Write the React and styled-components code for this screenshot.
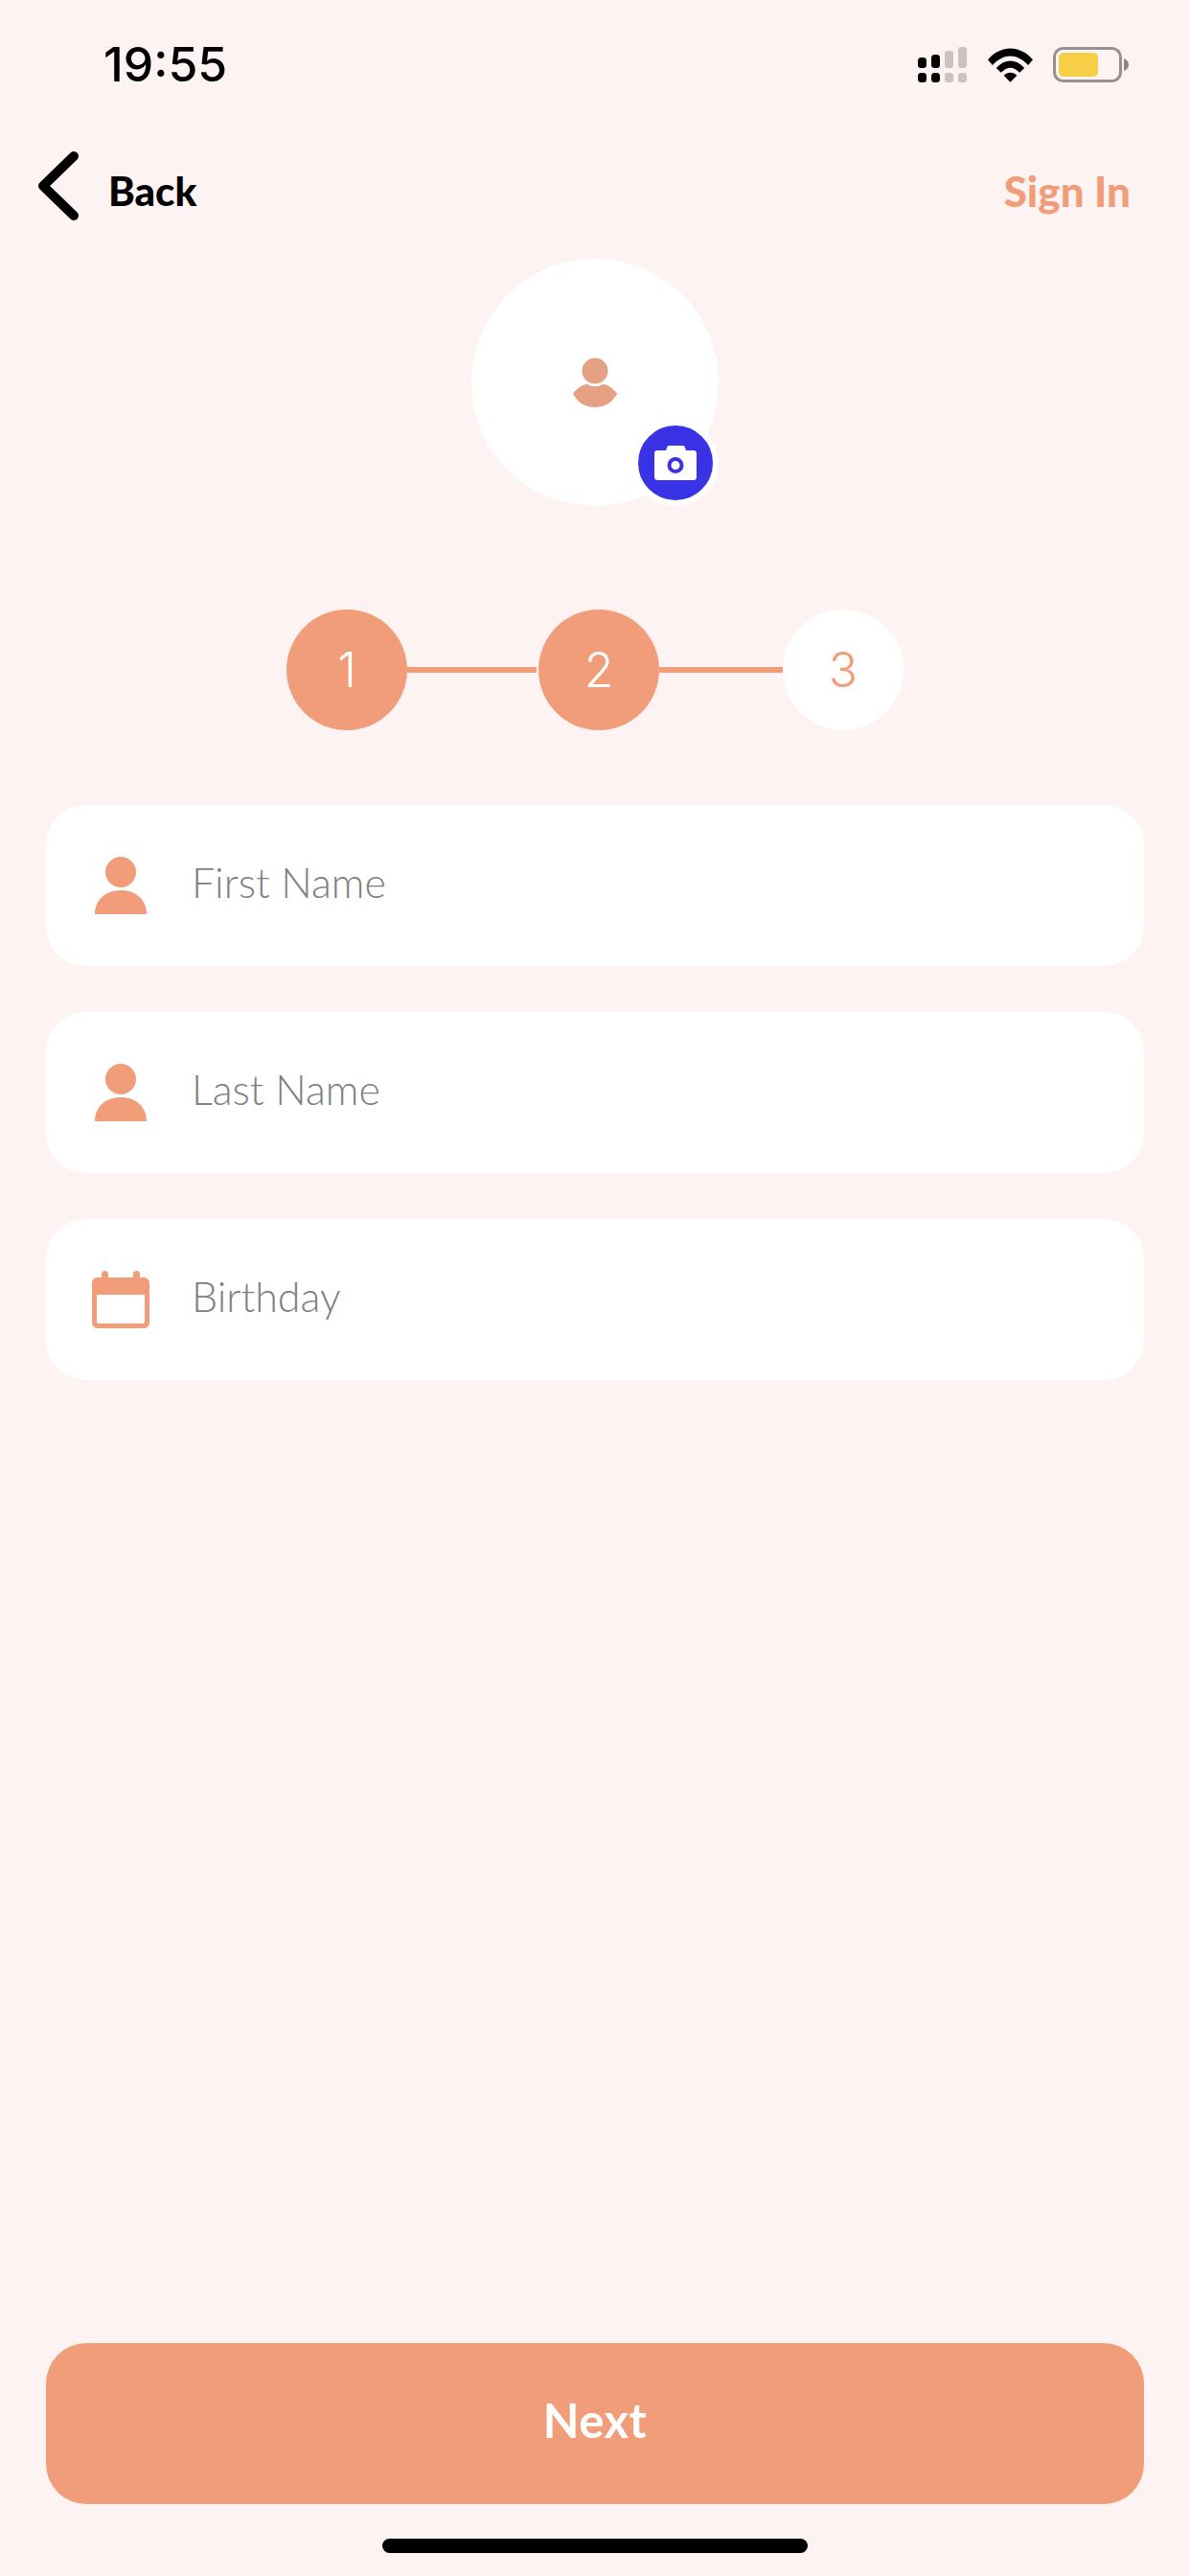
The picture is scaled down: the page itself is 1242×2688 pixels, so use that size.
import React from "react";
import styled, { createGlobalStyle } from "styled-components";

const GlobalStyle = createGlobalStyle`
  html, body {
    margin: 0;
    padding: 0;
    background-color: #fdf3f2;
  }
`;

const Screen = styled.div`
  display: flex;
  flex-direction: column;
  width: 1242px;
  height: 2688px;
  background-color: #fdf3f2;
  font-family: "Lato", "Liberation Sans", sans-serif;
  overflow: hidden;
`;

const StatusBar = styled.div`
  display: flex;
  justify-content: space-between;
  align-items: center;
  height: 37px;
  padding: 49px 64px 0 108px;
`;

const Time = styled.span`
  font-family: "Inter", "Liberation Sans", sans-serif;
  font-size: 50px;
  font-weight: 500;
  line-height: 37px;
  color: #000;
`;

const StatusIcons = styled.div`
  display: flex;
  align-items: center;
  gap: 21px;
`;

const Header = styled.div`
  display: flex;
  justify-content: space-between;
  align-items: center;
  height: 72px;
  margin-top: 72px;
  padding: 0 62px 0 40px;
`;

const BackLink = styled.div`
  display: flex;
  align-items: center;
  gap: 31px;
  font-size: 42px;
  font-weight: 900;
  color: #000;
`;

const BackLabel = styled.span`
  padding-top: 10px;
`;

const SignIn = styled.div`
  padding-top: 10px;
  font-size: 44px;
  font-weight: 900;
  color: #f19d7a;
`;

const Avatar = styled.div`
  position: relative;
  display: flex;
  align-items: center;
  justify-content: center;
  width: 258px;
  height: 258px;
  margin: 40px auto 0;
  border-radius: 50%;
  background-color: #fff;
`;

const CameraBadge = styled.div`
  position: absolute;
  right: 0;
  bottom: 0;
  display: flex;
  align-items: center;
  justify-content: center;
  width: 78px;
  height: 78px;
  border: 6px solid #fff;
  border-radius: 50%;
  background-color: #3a33e5;
`;

const Stepper = styled.div`
  display: flex;
  justify-content: center;
  align-items: center;
  margin-top: 108px;
`;

const Step = styled.div`
  display: flex;
  align-items: center;
  justify-content: center;
  width: 126px;
  height: 126px;
  border-radius: 50%;
  font-family: "Inter", "Liberation Sans", sans-serif;
  font-size: 50px;
  font-weight: 300;
  background-color: ${(p) => (p.$done ? "#f19d7a" : "#fff")};
  color: ${(p) => (p.$done ? "#fff" : "#f19d7a")};
`;

const StepLine = styled.div`
  width: ${(p) => p.$width}px;
  height: 6px;
  margin-right: ${(p) => p.$gap || 0}px;
  background-color: #f19d7a;
`;

const Form = styled.div`
  display: flex;
  flex-direction: column;
  gap: 48px;
  margin-top: 78px;
  padding: 0 48px;
`;

const Field = styled.div`
  display: flex;
  align-items: center;
  height: 168px;
  padding-left: 48px;
  border-radius: 42px;
  background-color: #fff;
`;

const FieldIcon = styled.div`
  display: flex;
  justify-content: center;
  width: 60px;
  margin-right: 44px;
`;

const Placeholder = styled.span`
  padding-bottom: 8px;
  font-size: 43px;
  font-weight: 300;
  color: #808080;
`;

const Footer = styled.div`
  display: flex;
  flex-direction: column;
  align-items: center;
  margin-top: auto;
  padding: 0 48px 24px;
`;

const NextButton = styled.div`
  display: flex;
  align-items: center;
  justify-content: center;
  align-self: stretch;
  box-sizing: border-box;
  height: 168px;
  padding-bottom: 8px;
  border-radius: 42px;
  background-color: #f19d7a;
  font-size: 49px;
  font-weight: 700;
  letter-spacing: 0.5px;
  color: #fff;
`;

const HomeBar = styled.div`
  width: 444px;
  height: 15px;
  margin-top: 36px;
  border-radius: 8px;
  background-color: #000;
`;

const SignalIcon = () => (
  <svg width="52" height="37" viewBox="0 0 52 37">
    <rect x="0" y="11" width="9" height="11" rx="3.5" fill="#000" />
    <rect x="14" y="8" width="9" height="14" rx="3.5" fill="#000" />
    <rect x="28" y="4" width="9" height="18" rx="3" fill="#cbc3c2" />
    <rect x="42" y="0" width="9" height="22" rx="3" fill="#cbc3c2" />
    <rect x="0" y="27" width="9" height="10" rx="3.5" fill="#000" />
    <rect x="14" y="27" width="9" height="10" rx="3.5" fill="#000" />
    <rect x="28" y="27" width="9" height="10" rx="3" fill="#cbc3c2" />
    <rect x="42" y="27" width="9" height="10" rx="3" fill="#cbc3c2" />
  </svg>
);

const WifiIcon = () => (
  <svg width="47" height="36" viewBox="0 0 48 36">
    <path d="M0 12 C14 -4 34 -4 48 12 L43 18 C31 5 17 5 5 18 Z" fill="#000" />
    <path d="M9 21 C18 11 30 11 39 21 L34 26 C27 19 21 19 14 26 Z" fill="#000" />
    <path d="M17 29 C21 25 27 25 31 29 L24 36 Z" fill="#000" />
  </svg>
);

const BatteryIcon = () => (
  <svg width="79" height="37" viewBox="0 0 79 37">
    <rect x="1.5" y="1.5" width="69" height="34" rx="9" fill="none" stroke="#989090" strokeWidth="3" />
    <rect x="6" y="6" width="41" height="25" rx="5" fill="#f7cf47" />
    <path d="M74 12 C77 13 79 15.500 79 18.500 C79 21.500 77 24 74 25 Z" fill="#8c8585" />
  </svg>
);

const ChevronIcon = () => (
  <svg width="42" height="72" viewBox="0 0 42 72">
    <path d="M37 5 L5 36 L37 67" fill="none" stroke="#000" strokeWidth="10" strokeLinecap="round" strokeLinejoin="round" />
  </svg>
);

const AvatarPerson = () => (
  <svg width="46" height="52" viewBox="0 0 46 52">
    <circle cx="23" cy="14" r="13.500" fill="#e5a183" />
    <path d="M0 38 C4 32 10 28 15 28 C20 31 26 31 31 28 C36 28 42 32 46 38 C41 47 33 52 23 52 C13 52 5 47 0 38 Z" fill="#e5a183" />
  </svg>
);

const CameraIcon = () => (
  <svg width="44" height="36" viewBox="0 0 44 36">
    <path
      fillRule="evenodd"
      d="M12 5 L13.500 1 C13.700 .4 14.300 0 15 0 L30 0 C30.700 0 31.300 .4 31.500 1 L33 5 L41 5 C42.700 5 44 6.300 44 8 L44 33 C44 34.700 42.700 36 41 36 L3 36 C1.300 36 0 34.700 0 33 L0 8 C0 6.300 1.300 5 3 5 Z M22 12 A8.500 8.500 0 1 0 22 29 A8.500 8.500 0 1 0 22 12 Z M22 16 A4.500 4.500 0 1 1 22 25 A4.500 4.500 0 1 1 22 16 Z"
      fill="#fff"
    />
  </svg>
);

const PersonIcon = () => (
  <svg width="54" height="60" viewBox="0 0 54 60">
    <circle cx="27" cy="16" r="16" fill="#f19d7a" />
    <path d="M0 60 C0 45 11 35 27 35 C43 35 54 45 54 60 Z" fill="#f19d7a" />
  </svg>
);

const CalendarIcon = () => (
  <svg width="60" height="60" viewBox="0 0 60 60">
    <path
      fillRule="evenodd"
      d="M10 7 L10 3.500 C10 1.500 11.500 0 13.500 0 C15.500 0 17 1.500 17 3.500 L17 7 L43 7 L43 3.500 C43 1.500 44.500 0 46.500 0 C48.500 0 50 1.500 50 3.500 L50 7 L54 7 C57.500 7 60 9.500 60 13 L60 54 C60 57.500 57.500 60 54 60 L6 60 C2.500 60 0 57.500 0 54 L0 13 C0 9.500 2.500 7 6 7 Z M5 25 L5 53 C5 54.200 5.800 55 7 55 L53 55 C54.200 55 55 54.200 55 53 L55 25 Z"
      fill="#f19d7a"
    />
  </svg>
);

const App = () => {
  return (
    <Screen>
      <GlobalStyle />
      <StatusBar>
        <Time>19:55</Time>
        <StatusIcons>
          <SignalIcon />
          <WifiIcon />
          <BatteryIcon />
        </StatusIcons>
      </StatusBar>
      <Header>
        <BackLink>
          <ChevronIcon />
          <BackLabel>Back</BackLabel>
        </BackLink>
        <SignIn>Sign In</SignIn>
      </Header>
      <Avatar>
        <AvatarPerson />
        <CameraBadge>
          <CameraIcon />
        </CameraBadge>
      </Avatar>
      <Stepper>
        <Step $done>1</Step>
        <StepLine $width={135} $gap={2} />
        <Step $done>2</Step>
        <StepLine $width={129} />
        <Step>3</Step>
      </Stepper>
      <Form>
        <Field>
          <FieldIcon>
            <PersonIcon />
          </FieldIcon>
          <Placeholder>First Name</Placeholder>
        </Field>
        <Field>
          <FieldIcon>
            <PersonIcon />
          </FieldIcon>
          <Placeholder>Last Name</Placeholder>
        </Field>
        <Field>
          <FieldIcon>
            <CalendarIcon />
          </FieldIcon>
          <Placeholder>Birthday</Placeholder>
        </Field>
      </Form>
      <Footer>
        <NextButton>Next</NextButton>
        <HomeBar />
      </Footer>
    </Screen>
  );
};

export default App;
